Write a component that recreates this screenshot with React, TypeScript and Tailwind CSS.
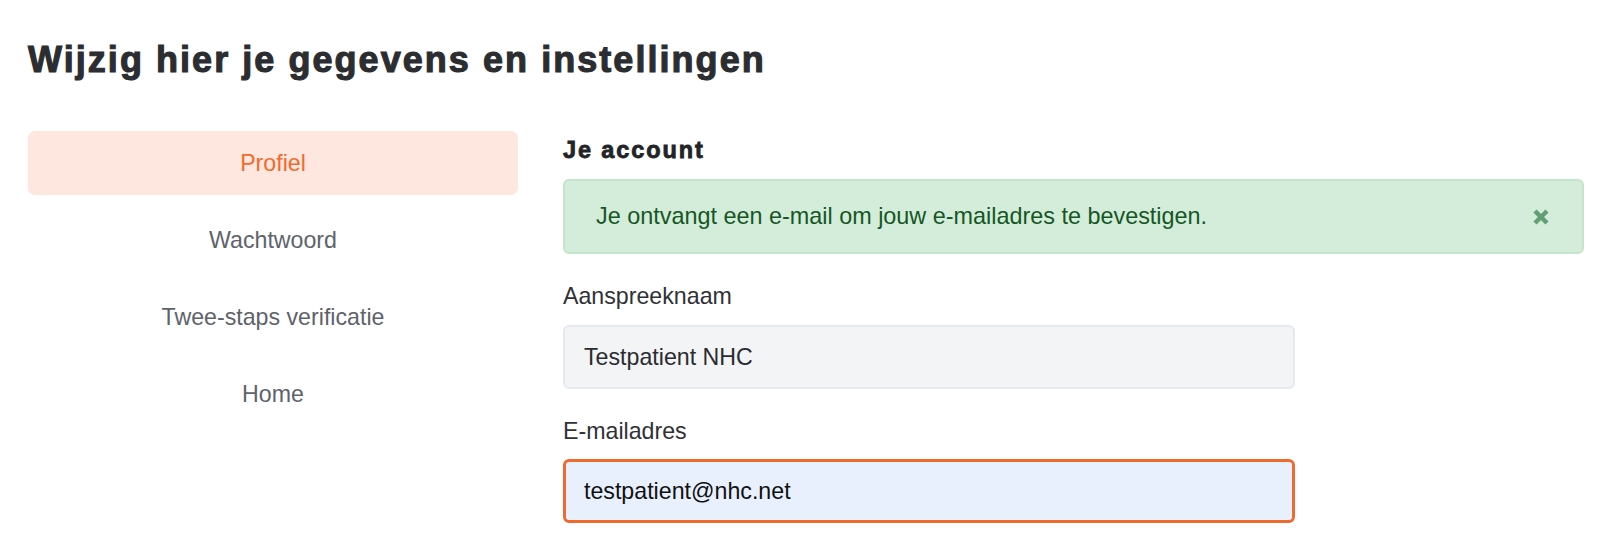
import React from "react";

const navItems = ["Wachtwoord", "Twee-staps verificatie", "Home"];

export default function App() {
  return (
    <div className="min-h-[533px] bg-white font-['Liberation_Sans',Arial,sans-serif] pl-[28px] pr-[16px]">
      <h1 className="pt-[38px] text-[36px] leading-[44px] font-bold text-[#2b2d31] [-webkit-text-stroke:1.1px_#2b2d31] tracking-[2.05px]">
        Wijzig hier je gegevens en instellingen
      </h1>
      <div className="mt-[49px] flex gap-[45px]">
        <nav className="w-[490px] shrink-0 flex flex-col gap-[14px]">
          <a className="h-[64px] rounded-[7px] bg-[#fde7de] flex items-center justify-center text-[23.2px] text-[#f26a2d]">
            Profiel
          </a>
          {navItems.map((n) => (
            <a key={n} className="h-[63px] flex items-center justify-center text-[23.2px] text-[#5e636b]">
              {n}
            </a>
          ))}
        </nav>
        <div className="flex-1 pt-[4px]">
          <h2 className="text-[23.5px] leading-[30px] font-bold text-[#222428] [-webkit-text-stroke:0.8px_#222428] tracking-[1.9px]">Je account</h2>
          <div className="mt-[14px] h-[75px] rounded-[6px] border-2 border-[#c3e6cb] bg-[#d4edda] flex items-center justify-between pl-[31px] pr-[32px]">
            <span className="text-[23.4px] text-[#155724]">Je ontvangt een e-mail om jouw e-mailadres te bevestigen.</span>
            <svg width="18" height="18" viewBox="0 0 18 18" className="shrink-0">
              <path d="M3 3 L15 15 M15 3 L3 15" stroke="#639f74" strokeWidth="4.5" strokeLinecap="butt" />
            </svg>
          </div>
          <label className="block mt-[27px] text-[23.2px] leading-[30px] text-[#2f3136]">Aanspreeknaam</label>
          <div className="mt-[14px] w-[732px] h-[64px] rounded-[6px] border-2 border-[#e6e9ee] bg-[#f3f4f6] flex items-center pl-[19px] text-[23.2px] text-[#2a2c30]">
            Testpatient NHC
          </div>
          <label className="block mt-[27px] text-[23.2px] leading-[30px] text-[#2f3136]">E-mailadres</label>
          <div className="mt-[13px] w-[732px] h-[64px] rounded-[6px] border-[3px] border-[#ef6a2d] bg-[#e8f0fe] flex items-center pl-[18px] text-[23.2px] text-[#111]">
            testpatient@nhc.net
          </div>
        </div>
      </div>
    </div>
  );
}
